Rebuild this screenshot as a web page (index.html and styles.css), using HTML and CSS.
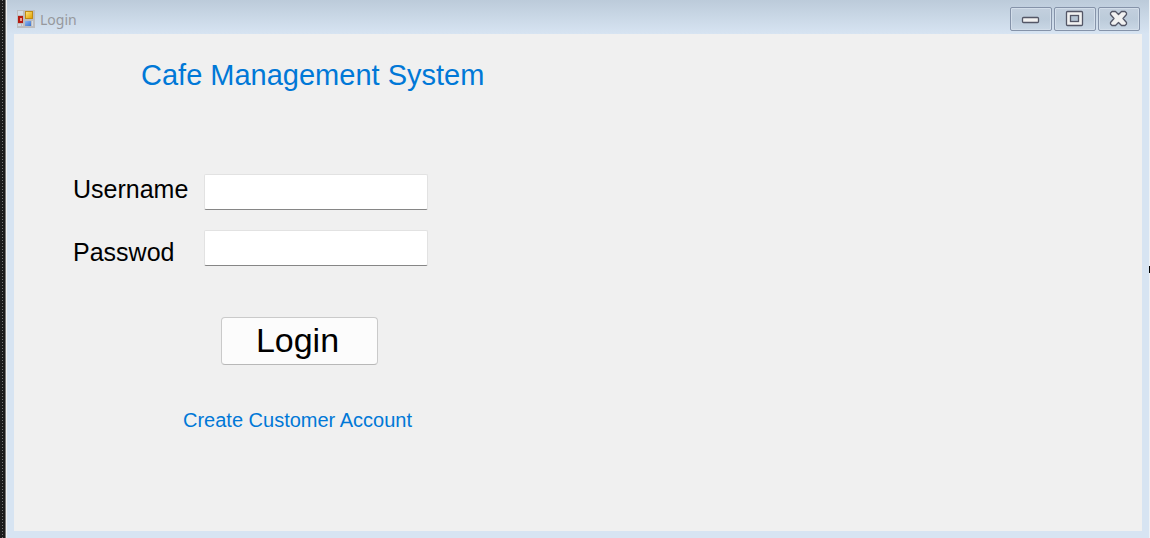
FILE: index.html
```html
<!DOCTYPE html>
<html lang="en">
<head>
<meta charset="utf-8">
<title>Login</title>
<link rel="stylesheet" href="styles.css">
</head>
<body>
<div class="desktop">
  <div class="edge"></div>
  <div class="window">
    <header class="titlebar">
      <svg class="app-icon" width="18" height="18" viewBox="0 0 18 18" aria-hidden="true" shape-rendering="crispEdges">
        <defs>
          <linearGradient id="gold" x1="0" y1="0" x2="1" y2="1"><stop offset="0" stop-color="#fbe27a"/><stop offset="1" stop-color="#e3a200"/></linearGradient>
          <linearGradient id="blue" x1="0" y1="0" x2="1" y2="1"><stop offset="0" stop-color="#8fb6f0"/><stop offset="1" stop-color="#3a74cf"/></linearGradient>
        </defs>
        <rect width="18" height="18" fill="#bdbdbf"/>
        <path fill="#d2dbe5" d="M1 1h5v4H1zM1 14h3v2H1zM5 14h1v2H5zM15 11h1v5h-1z"/>
        <rect x="1" y="6" width="5" height="7" fill="#b51a10"/>
        <rect x="3" y="8" width="2" height="3" fill="#ef9b90"/>
        <rect x="8" y="1" width="8" height="8" fill="#c08a10"/>
        <rect x="9" y="2" width="6" height="6" fill="url(#gold)"/>
        <rect x="8" y="11" width="6" height="5" fill="url(#blue)"/>
      </svg>
      <span class="caption">Login</span>
      <div class="controls">
        <button class="control" type="button" aria-label="Minimize">
          <svg width="22" height="18" viewBox="1 0 22 18"><rect x="3.500" y="7.500" width="16" height="5" rx="1" fill="#f1f1f1" stroke="#535666" stroke-width="1.300"/></svg>
        </button>
        <button class="control" type="button" aria-label="Maximize">
          <svg width="22" height="18" viewBox="1 0 22 18"><rect x="3.500" y="1.500" width="16" height="14" rx="1" fill="#f1f1f1" stroke="#535666" stroke-width="1.300"/><rect x="7.500" y="5.500" width="8" height="6" fill="#b5c4d3" stroke="#535666" stroke-width="1.300"/></svg>
        </button>
        <button class="control" type="button" aria-label="Close">
          <svg width="22" height="18" viewBox="1 0 22 18"><path d="M5 1.500h3.500l3 3 3-3H18l1.500 1.500v1.500L16 8.500l3.500 4V14L18 15.500h-3.500l-3-3-3 3H5L3.500 14v-1.500l3.500-4-3.500-4V3z" fill="#f1f1f1" stroke="#535666" stroke-width="1.300" stroke-linejoin="round"/></svg>
        </button>
      </div>
    </header>
    <main class="client">
      <h1 class="title">Cafe Management System</h1>
      <form class="login">
        <label class="label" for="user">Username</label>
        <input class="field" id="user" type="text">
        <label class="label label-low" for="pass">Passwod</label>
        <input class="field" id="pass" type="password">
        <button class="submit" type="button">Login</button>
      </form>
      <a class="create" href="#">Create Customer Account</a>
    </main>
  </div>
  <div class="right-edge"><div class="mark"></div></div>
</div>
</body>
</html>
```
FILE: styles.css
```css
* { box-sizing: border-box; }

body {
  margin: 0;
  font-family: "Liberation Sans", Arial, sans-serif;
  color: #000;
}

.desktop {
  display: flex;
  min-height: 100vh;
}

.edge {
  flex: none;
  width: 7px;
  border-left: 2px solid #1b1b1b;
  border-right: 1px solid #f0f1f2;
  background:
    linear-gradient(#777, #777) right / 1px 100% no-repeat,
    linear-gradient(#1b1b1b, #1b1b1b) 1px 0 / 2px 100% no-repeat,
    repeating-linear-gradient(#777 0 1px, #1b1b1b 1px 3px);
}

.window {
  flex: 1;
  display: flex;
  flex-direction: column;
  padding: 0 7px 7px;
  background: linear-gradient(#bccbda, #d7e4f2 34px);
}

.titlebar {
  display: flex;
  align-items: center;
  height: 34px;
  padding: 4px 2px 0 3px;
}

.app-icon { flex: none; }

.caption {
  margin-left: 5px;
  padding-top: 1px;
  font: 14px/20px "Noto Sans", sans-serif;
  color: #96989d;
}

.controls {
  display: flex;
  gap: 2px;
  margin-left: auto;
}

.control {
  display: flex;
  align-items: center;
  justify-content: center;
  width: 42px;
  height: 24px;
  padding: 0;
  border: 1px solid #8593a9;
  border-radius: 2px;
  background: linear-gradient(#c3d0de, #bccbda 50%, #c9d7e5);
  box-shadow: inset 0 0 0 1px #d3deea;
}

.client {
  flex: 1;
  padding: 24px 59px;
  background: #f0f0f0;
}

.title {
  margin: 0 0 82px 68px;
  font-size: 29px;
  font-weight: 400;
  line-height: 34px;
  color: #0078d7;
}

.login {
  display: grid;
  grid-template-columns: 131px 224px;
  row-gap: 20px;
}

.label {
  font-size: 25px;
  line-height: 30px;
}

.label-low { padding-top: 7px; }

.field {
  width: 100%;
  height: 36px;
  padding: 0 6px;
  border: 1px solid #e2e2e2;
  border-bottom-color: #868686;
  border-radius: 2px;
  background: #fff;
  font: inherit;
  font-size: 25px;
}

.submit {
  grid-column: 2;
  width: 157px;
  height: 48px;
  margin: 30px 0 0 17px;
  padding: 0 4px 2px 0;
  border: 1px solid #cacaca;
  border-bottom-color: #b8b8b8;
  border-radius: 4px;
  background: #fcfcfc;
  font: inherit;
  font-size: 34px;
  color: #000;
}

.create {
  display: inline-block;
  margin: 43px 0 0 110px;
  font-size: 20px;
  line-height: 24px;
  color: #0078d7;
  text-decoration: none;
}

.right-edge {
  display: flex;
  align-items: center;
  width: 1px;
  background: #eef2f6;
}

.mark {
  width: 1px;
  height: 7px;
  background: #000;
}
```
